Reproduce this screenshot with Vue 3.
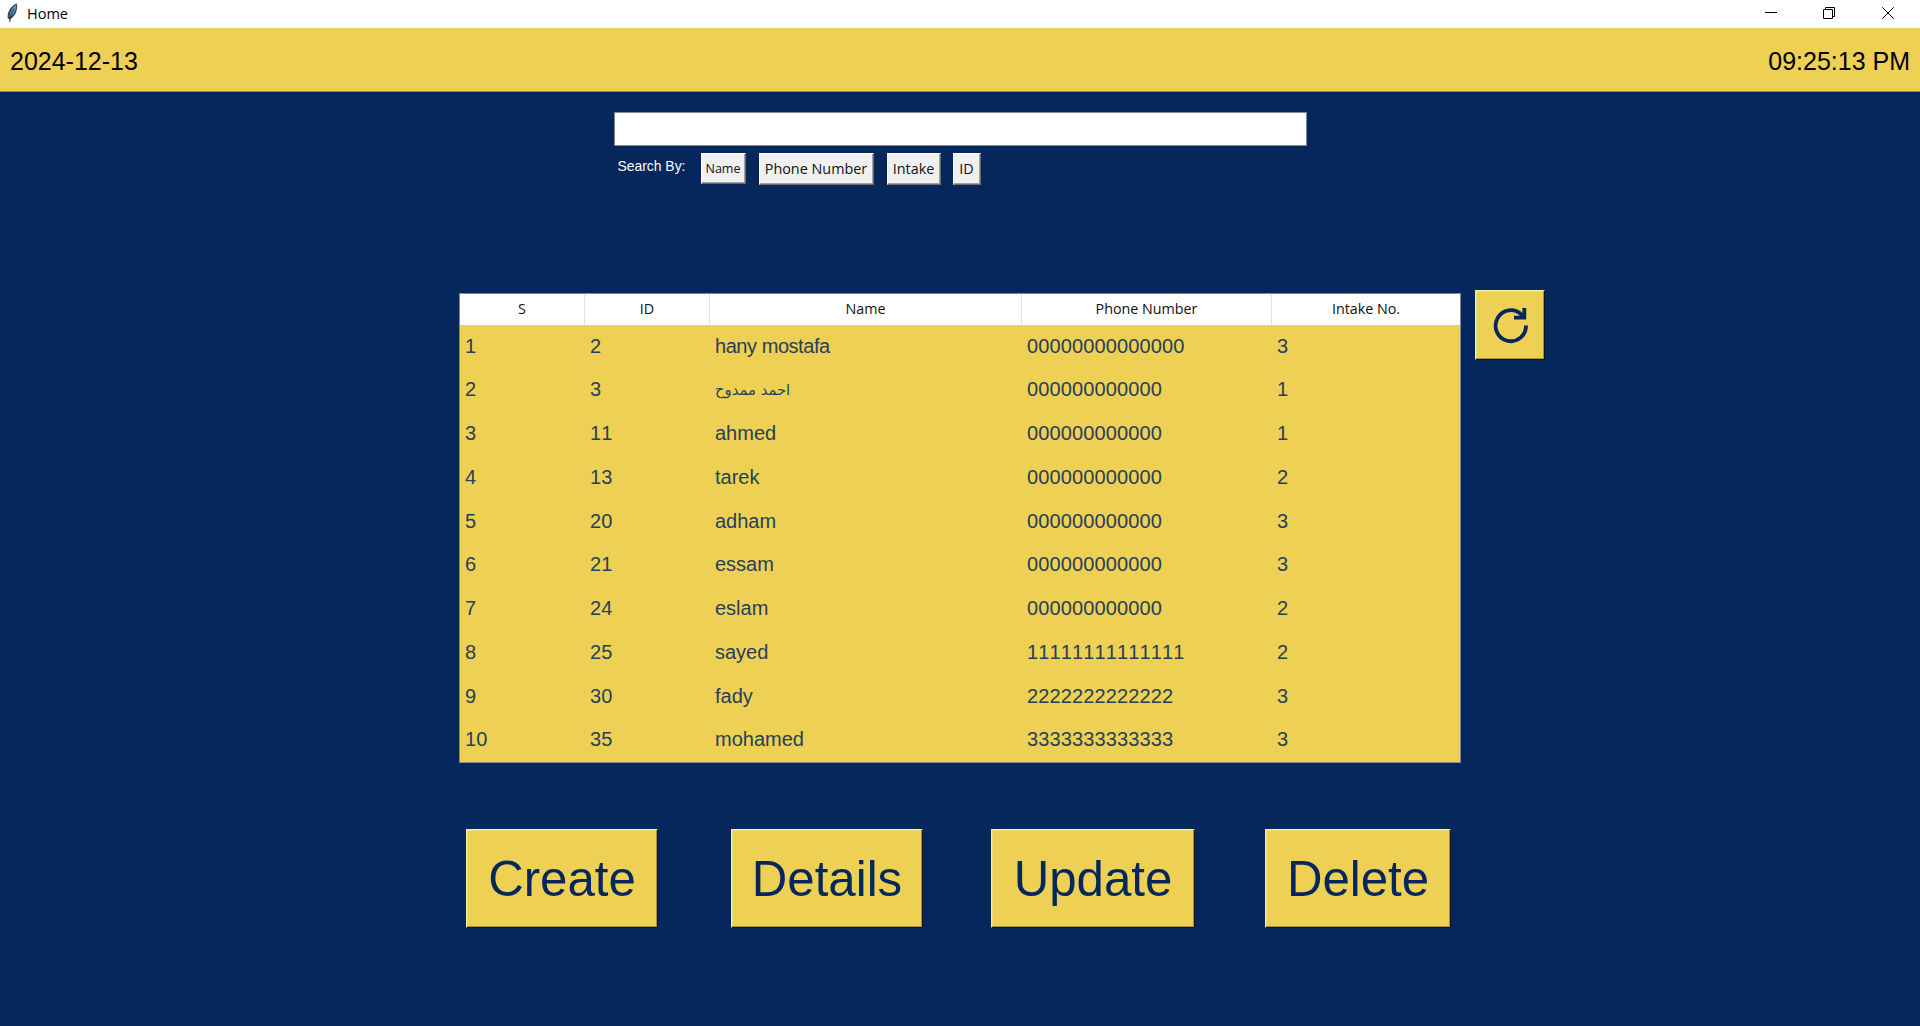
<script setup>
const columns = ['S', 'ID', 'Name', 'Phone Number', 'Intake No.']
const rows = [
  ['1', '2', 'hany mostafa', '00000000000000', '3'],
  ['2', '3', 'احمد ممدوح', '000000000000', '1'],
  ['3', '11', 'ahmed', '000000000000', '1'],
  ['4', '13', 'tarek', '000000000000', '2'],
  ['5', '20', 'adham', '000000000000', '3'],
  ['6', '21', 'essam', '000000000000', '3'],
  ['7', '24', 'eslam', '000000000000', '2'],
  ['8', '25', 'sayed', '11111111111111', '2'],
  ['9', '30', 'fady', '2222222222222', '3'],
  ['10', '35', 'mohamed', '3333333333333', '3'],
]
const filters = ['Name', 'Phone Number', 'Intake', 'ID']
const actions = ['Create', 'Details', 'Update', 'Delete']
const isArabic = (text) => /[\u0600-\u06ff]/.test(text)
</script>

<template>
  <div class="window">
    <header class="titlebar">
      <svg class="feather" width="14" height="20" viewBox="0 0 14 20">
        <path d="M11 0.500C7 1.500 3 6 1.800 11L1.600 14.500L3.500 17L7.500 13.500C10.500 10 11.700 5 11 0.500Z" fill="#3a4250" />
        <path d="M10.300 1.500C7.500 3 5 6.500 4 10.500L3.500 14L6 12.500C9 9.500 10.600 5 10.300 1.500Z" fill="#5b94d6" />
        <path d="M8 5.500C6 8.500 4.500 12.500 3.700 19" fill="none" stroke="#20242b" stroke-width="0.900" />
      </svg>
      <span class="title">Home</span>
      <div class="controls">
        <svg width="12" height="12" viewBox="0 0 12 12"><path d="M0 5.500H12" /></svg>
        <svg width="12" height="12" viewBox="0 0 12 12"><path d="M0.500 2.500H9.500V11.500H0.500ZM2.500 2.500V0.500H11.500V9.500H9.500" /></svg>
        <svg width="12" height="12" viewBox="0 0 12 12"><path d="M0.300 0.300L11.700 11.700M11.700 0.300L0.300 11.700" /></svg>
      </div>
    </header>

    <div class="clockbar">
      <span>2024-12-13</span>
      <span>09:25:13 PM</span>
    </div>

    <section class="search">
      <input class="field" type="text" />
      <div class="filters">
        <span class="label">Search By:</span>
        <button v-for="(f, i) in filters" :key="f" class="filter" :class="'filter-' + i"><span>{{ f }}</span></button>
      </div>
    </section>

    <main class="content">
      <div class="table">
        <div class="row head">
          <div v-for="c in columns" :key="c" class="th"><span>{{ c }}</span></div>
        </div>
        <div v-for="r in rows" :key="r[0]" class="row">
          <div
            v-for="(v, i) in r"
            :key="i"
            class="td"
            :class="{ digits: i !== 2, arabic: isArabic(v), tight: v.length > 9 && i === 2 }"
          >{{ v }}</div>
        </div>
      </div>
      <button class="refresh">
        <svg width="36" height="38" viewBox="0 0 36 38">
          <path d="M33 18.500A15.200 15.500 0 1 1 28.500 7.700L31 10" />
          <path d="M31.300 1V10.700H21" />
        </svg>
      </button>
    </main>

    <footer class="actions">
      <button v-for="(a, i) in actions" :key="a" class="action" :class="'action-' + i"><span>{{ a }}</span></button>
    </footer>
  </div>
</template>

<style>
body {
  margin: 0;
  overflow: hidden;
}
</style>

<style scoped>
.window {
  width: 1920px;
  height: 1026px;
  overflow: hidden;
  box-sizing: border-box;
  background: #05275b;
  font-family: "Liberation Sans", Arial, sans-serif;
  font-kerning: none;
  color: #05275b;
}
button,
input {
  margin: 0;
  padding: 0;
  border: 0;
  border-radius: 0;
  box-sizing: border-box;
  font: inherit;
  font-kerning: none;
  color: inherit;
}
.titlebar {
  display: flex;
  align-items: center;
  height: 28px;
  background: #fff;
  color: #000;
}
.feather {
  margin: -3px 0 0 6px;
}
.title {
  margin: -1px 0 0 7px;
  font: 14.500px/20px "Open Sans", "Noto Sans", sans-serif;
}
.controls {
  display: flex;
  gap: 46px;
  margin: -2px 26px 0 auto;
}
.controls svg:nth-child(-n+2) {
  position: relative;
  left: -1px;
}
.controls path {
  fill: none;
  stroke: #000;
  stroke-width: 1;
}
.clockbar {
  display: flex;
  justify-content: space-between;
  align-items: center;
  box-sizing: border-box;
  height: 64px;
  padding: 4px 10px 0;
  background: #edd054;
  border-bottom: 1px solid #8f8a5e;
  font-size: 25px;
  color: #000;
}
.search {
  width: 693px;
  height: 201px;
  box-sizing: border-box;
  margin: 0 auto;
  padding-top: 20px;
}
.field {
  display: block;
  width: 693px;
  height: 34px;
  background: #fff;
  border: 1px solid #7f8694;
}
.filters {
  display: flex;
  align-items: flex-start;
  padding: 7px 0 0 4px;
}
.label {
  width: 83px;
  padding-top: 5px;
  font-size: 13.900px;
  line-height: 16px;
  color: #fff;
  white-space: nowrap;
}
.filter {
  height: 32px;
  background: #f0f0f0;
  border: 1px solid;
  border-color: #fff #6b6b6b #6b6b6b #fff;
  box-shadow: inset -1px -1px 0 #a0a0a0;
  font: 14.400px/20px "Open Sans", "Noto Sans", sans-serif;
  color: #111;
  white-space: nowrap;
  display: flex;
  justify-content: center;
  align-items: center;
}
.filter-0 { width: 45px; height: 31px; margin-right: 13px; font-size: 12.500px; }
.filter-1 { width: 115px; margin-right: 13px; }
.filter-2 { width: 54px; margin-right: 12px; }
.filter-3 { width: 28px; }
.content {
  display: flex;
  align-items: flex-start;
  height: 536px;
  padding: 0 0 0 459px;
}
.table {
  box-sizing: border-box;
  width: 1002px;
  height: 470px;
  border: 1px solid #80868f;
  background: #edd054;
}
.row {
  display: grid;
  grid-template-columns: 125px 125px 312px 250px 188px;
  height: 43.750px;
}
.head {
  height: 30.500px;
  background: #fff;
  color: #111;
  font: 14.300px/30px "Open Sans", "Noto Sans", sans-serif;
  text-align: center;
}
.th {
  box-sizing: border-box;
  border-right: 1px solid #e2e2e2;
}
.th:last-child {
  border-right: 0;
}
.td {
  padding-left: 5px;
  font-size: 20px;
  line-height: 43px;
  white-space: nowrap;
  color: #273f5a;
}
.digits {
  letter-spacing: 0.130px;
}
.tight {
  letter-spacing: -0.450px;
}
.arabic {
  font-family: "DejaVu Sans", sans-serif;
  font-size: 14.800px;
  letter-spacing: 0;
}
.refresh {
  display: flex;
  justify-content: center;
  align-items: center;
  width: 70px;
  height: 70px;
  margin: -3px 0 0 14px;
  padding: 2px 0 0 2px;
}
.refresh path {
  fill: none;
  stroke: #05275b;
  stroke-width: 3.800;
}
.refresh,
.action {
  background: #edd054;
  border: 1px solid;
  border-color: #f7ec9f #14140c #14140c #f7ec9f;
  box-shadow: inset -1px -1px 0 #a8923c, inset 1px 1px 0 #f1dc78;
}
.actions {
  display: flex;
  padding-left: 466px;
}
.action {
  height: 99px;
  font-size: 49.200px;
  line-height: 96px;
  text-align: center;
}
.action-0 { width: 192px; margin-right: 73px; }
.action-1 { width: 192px; margin-right: 68px; }
.action-2 { width: 204px; margin-right: 70px; }
.action-3 { width: 186px; }
</style>
